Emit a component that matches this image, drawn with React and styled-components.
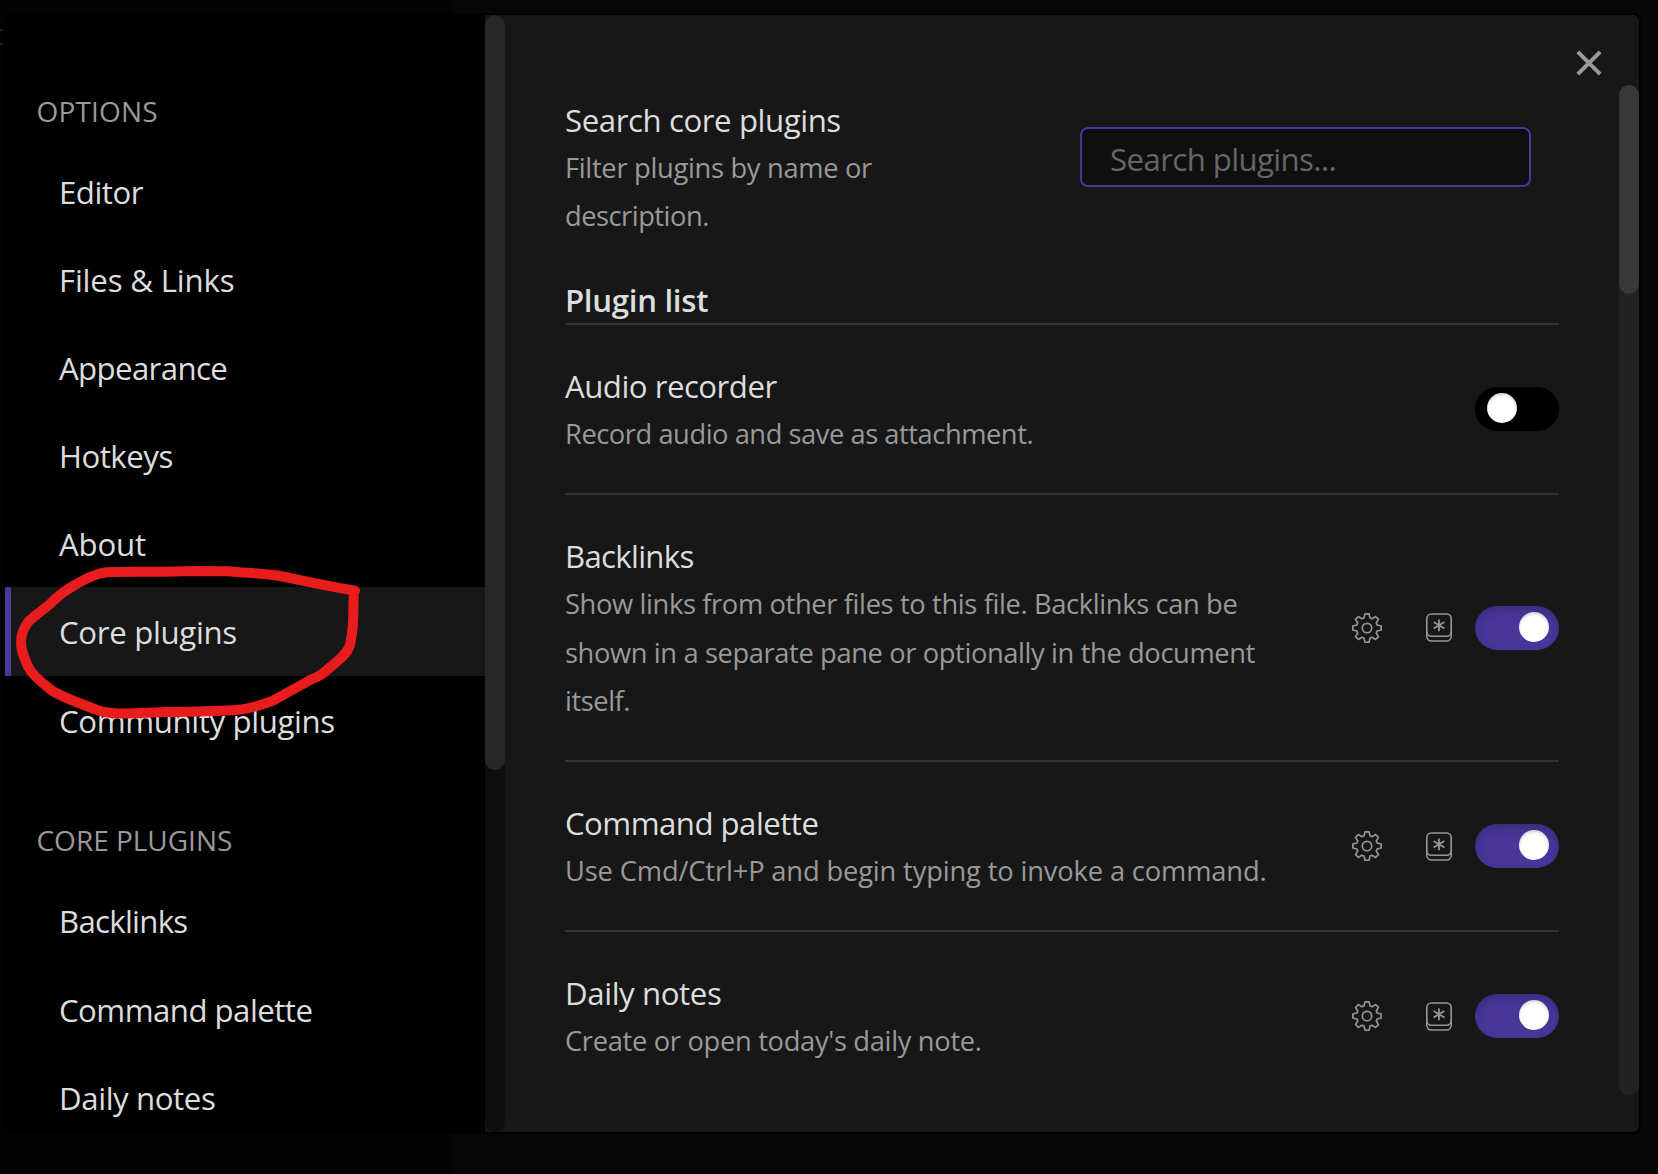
import React from "react";
import styled, { createGlobalStyle } from "styled-components";

const GlobalStyle = createGlobalStyle`
  * { box-sizing: border-box; }
  body {
    margin: 0;
    overflow: hidden;
    background: #000;
    color: #dcddde;
    font-family: "Open Sans", "Noto Sans", sans-serif;
    font-size: 31.2px;
  }
`;

const Page = styled.div`
  position: relative;
  width: 1658px;
  height: 1174px;
  padding: 13px 0 0 3px;
  border-bottom: 1px solid #000;
  background: linear-gradient(90deg, #030303 0 452px, #05050c 452px 454px, #060606 454px);
`;

const BackdropMark = styled.i`
  position: absolute;
  left: 0;
  top: 29px;
  width: 3px;
  height: 16px;
  border: solid #242424;
  border-width: 2px 0;
`;

const Modal = styled.main`
  position: relative;
  display: flex;
  width: 1638px;
  height: 1121px;
  border: 2px solid #000;
  border-radius: 8px;
  background: #171717;
  overflow: hidden;
`;

const Sidebar = styled.nav`
  flex: 0 0 480px;
  padding-top: 19px;
  background: #000;
  overflow: hidden;
`;

const GroupTitle = styled.div`
  padding: 52.5px 0 12px 31.5px;
  color: #999;
  font-size: 28px;
  line-height: 48px;
  letter-spacing: ${(p) => p.$track}px;
`;

const NavItem = styled.a`
  display: block;
  height: 88.2px;
  padding: 1px 0 0 ${(p) => (p.$active ? 48 : 54)}px;
  border-left: ${(p) => (p.$active ? "6px solid #483699" : "0")};
  background: ${(p) => (p.$active ? "#171717" : "transparent")};
  line-height: 88px;
  letter-spacing: ${(p) => p.$track}px;
  white-space: nowrap;
`;

const Scrollbar = styled.div`
  flex: 0 0 20px;
  height: ${(p) => p.$height};
  margin-top: ${(p) => p.$top}px;
  border-radius: ${(p) => p.$radius};
  background: ${(p) => p.$track};
`;

const Thumb = styled.div`
  height: ${(p) => p.$height}px;
  border-radius: 10px;
  background: ${(p) => p.$color};
`;

const Content = styled.section`
  flex: 1;
  padding: 81px 60px 0;
`;

const SearchRow = styled.div`
  display: flex;
  justify-content: space-between;
  align-items: flex-start;
`;

const SearchInput = styled.input`
  width: 451px;
  height: 60px;
  margin: 31px 28px 0 0;
  padding: 4px 28px 0;
  border: 2px solid #483699;
  border-radius: 8px;
  outline: 0;
  background: #0f0f0f;
  color: #dcddde;
  font: inherit;
  letter-spacing: -0.6px;
  &::placeholder { color: #666; opacity: 1; }
`;

const Heading = styled.h3`
  height: 49px;
  margin: 35.5px 0 0;
  border-bottom: 2px solid #333;
  font-size: inherit;
  font-weight: 600;
  line-height: 49px;
  letter-spacing: -0.3px;
`;

const InfoBlock = styled.div``;

const Row = styled.div`
  display: flex;
  justify-content: space-between;
  align-items: center;
  padding: 35px 0;
  & + & { border-top: 2px solid #333; }
  ${InfoBlock} { padding-top: 2px; }
`;

const Name = styled.div`
  height: 48px;
  line-height: 49px;
  letter-spacing: ${(p) => p.$track}px;
`;

const DescLine = styled.div`
  color: #999;
  font-size: 27.3px;
  line-height: 48.25px;
  letter-spacing: ${(p) => p.$track}px;
  white-space: nowrap;
`;

const Controls = styled.div`
  display: flex;
  align-items: center;
`;

const GearSvg = styled.svg`
  width: 30px;
  height: 30px;
  margin-right: 44px;
`;

const KeySvg = styled.svg`
  width: 26px;
  height: 29px;
  margin-right: 23px;
`;

const Toggle = styled.div`
  width: 84px;
  height: 44px;
  padding: 6px 0 0 ${(p) => (p.$on ? 44 : 12)}px;
  border-radius: 22px;
  background: ${(p) => (p.$on ? "#483699" : "#000")};
  box-shadow: inset 0 4px 10px rgba(0, 0, 0, 0.2);
`;

const Knob = styled.div`
  width: 30px;
  height: 30px;
  border-radius: 50%;
  background: #fff;
  box-shadow: inset 0 2px 3px rgba(0, 0, 0, 0.18);
`;

const CloseButton = styled.svg`
  position: absolute;
  top: 33.5px;
  right: 36px;
  width: 28px;
  height: 28px;
`;

const Marker = styled.svg`
  position: absolute;
  left: 0;
  top: 550px;
  width: 380px;
  height: 180px;
  pointer-events: none;
`;

const gearPath = (() => {
  const tooth = [[-3, -10.1], [-2, -14.2], [2, -14.2], [3, -10.1]];
  const pts = [];
  for (let k = 0; k < 8; k++) {
    const a = (k * Math.PI) / 4;
    tooth.forEach(([x, y]) => {
      const px = 15 + x * Math.cos(a) - y * Math.sin(a);
      const py = 15 + x * Math.sin(a) + y * Math.cos(a);
      pts.push(`${px.toFixed(2)} ${py.toFixed(2)}`);
    });
  }
  return `M${pts.join("L")}Z`;
})();

const Gear = () => (
  <GearSvg viewBox="0 0 30 30" fill="none" stroke="#969696" strokeWidth="1.65" strokeLinejoin="round">
    <path d={gearPath} />
    <circle cx="15" cy="15" r="4.7" />
  </GearSvg>
);

const Key = () => (
  <KeySvg viewBox="0 0 26 29" fill="none" stroke="#969696" strokeWidth="1.6">
    <rect x="0.8" y="1" width="24.4" height="22.3" rx="4.6" />
    <path d="M.8 18v5.2a4.8 4.8 0 0 0 4.8 4.8h14.8a4.8 4.8 0 0 0 4.8-4.8V18" />
    <path d="M13 6.4v11.8M7.6 9.1l10.8 6.4M18.4 9.1L7.6 15.5" strokeWidth="1.8" />
  </KeySvg>
);

const groups = [
  {
    title: "OPTIONS", track: 0.16,
    items: [
      ["Editor", -0.5], ["Files & Links", -0.18], ["Appearance", -0.62], ["Hotkeys", -0.5],
      ["About", -0.15], ["Core plugins", -0.32], ["Community plugins", -0.37],
    ],
  },
  {
    title: "CORE PLUGINS", track: -0.02,
    items: [["Backlinks", -0.72], ["Command palette", -0.53], ["Daily notes", -0.4]],
  },
];

const plugins = [
  { name: "Audio recorder", track: -0.5, on: false, desc: [["Record audio and save as attachment.", -0.46]] },
  {
    name: "Backlinks", track: -0.7, on: true,
    desc: [
      ["Show links from other files to this file. Backlinks can be", -0.37],
      ["shown in a separate pane or optionally in the document", -0.385],
      ["itself.", -0.45],
    ],
  },
  { name: "Command palette", track: -0.53, on: true, desc: [["Use Cmd/Ctrl+P and begin typing to invoke a command.", -0.15]] },
  { name: "Daily notes", track: -0.4, on: true, desc: [["Create or open today's daily note.", -0.32]] },
];

const Info = ({ name, track, desc }) => (
  <InfoBlock>
    <Name $track={track}>{name}</Name>
    {desc.map(([text, t]) => <DescLine key={text} $track={t}>{text}</DescLine>)}
  </InfoBlock>
);

export default function App() {
  return (
    <Page>
      <GlobalStyle />
      <BackdropMark />
      <Modal>
        <Sidebar>
          {groups.map((g) => (
            <React.Fragment key={g.title}>
              <GroupTitle $track={g.track}>{g.title}</GroupTitle>
              {g.items.map(([label, t]) => (
                <NavItem key={label} $track={t} $active={label === "Core plugins"}>{label}</NavItem>
              ))}
            </React.Fragment>
          ))}
        </Sidebar>
        <Scrollbar $top={0} $height="100%" $track="#0d0d0d" $radius="10px">
          <Thumb $height={755} $color="#272727" />
        </Scrollbar>
        <Content>
          <SearchRow>
            <Info
              name="Search core plugins"
              track={-0.42}
              desc={[["Filter plugins by name or", -0.31], ["description.", -0.5]]}
            />
            <SearchInput placeholder="Search plugins..." />
          </SearchRow>
          <Heading>Plugin list</Heading>
          <div>
            {plugins.map((p) => (
              <Row key={p.name}>
                <Info {...p} />
                <Controls>
                  {p.on && <Gear />}
                  {p.on && <Key />}
                  <Toggle $on={p.on}><Knob /></Toggle>
                </Controls>
              </Row>
            ))}
          </div>
        </Content>
        <Scrollbar $top={70} $height="1011px" $track="#222" $radius="10px">
          <Thumb $height={209} $color="#383838" />
        </Scrollbar>
        <CloseButton viewBox="0 0 28 28" stroke="#999" strokeWidth="4">
          <path d="M2.8 2.8L25.2 25.2M25.2 2.8L2.8 25.2" />
        </CloseButton>
      </Modal>
      <Marker viewBox="0 550 380 180" fill="none" stroke="#e81c1c" strokeWidth="10" strokeLinecap="round" strokeLinejoin="round">
        <path d="M354 591L353.5 600C353.5 625 352.5 632 350 645C347 655 336 662 327 670C320 676 315 678 313 678.5L273 700.7C262 705 250 709 236 710C220 711.3 200 711.5 167 712L125 713.5C110 714 103 712 97 710C80 703 60 697 50 689C38 680 32 674 28 666.7C23 655 21 650 21 643C21 635 23 628 29 621C38 613 43 610 50 604C58 596 64 591 74 585.5C85 579 97 573 107 572.3C125 571.5 145 572 163 571.7L195 571L227 571.2C245 573 262 573 277 575.5C290 577.5 310 583 355 590.7" />
      </Marker>
    </Page>
  );
}
